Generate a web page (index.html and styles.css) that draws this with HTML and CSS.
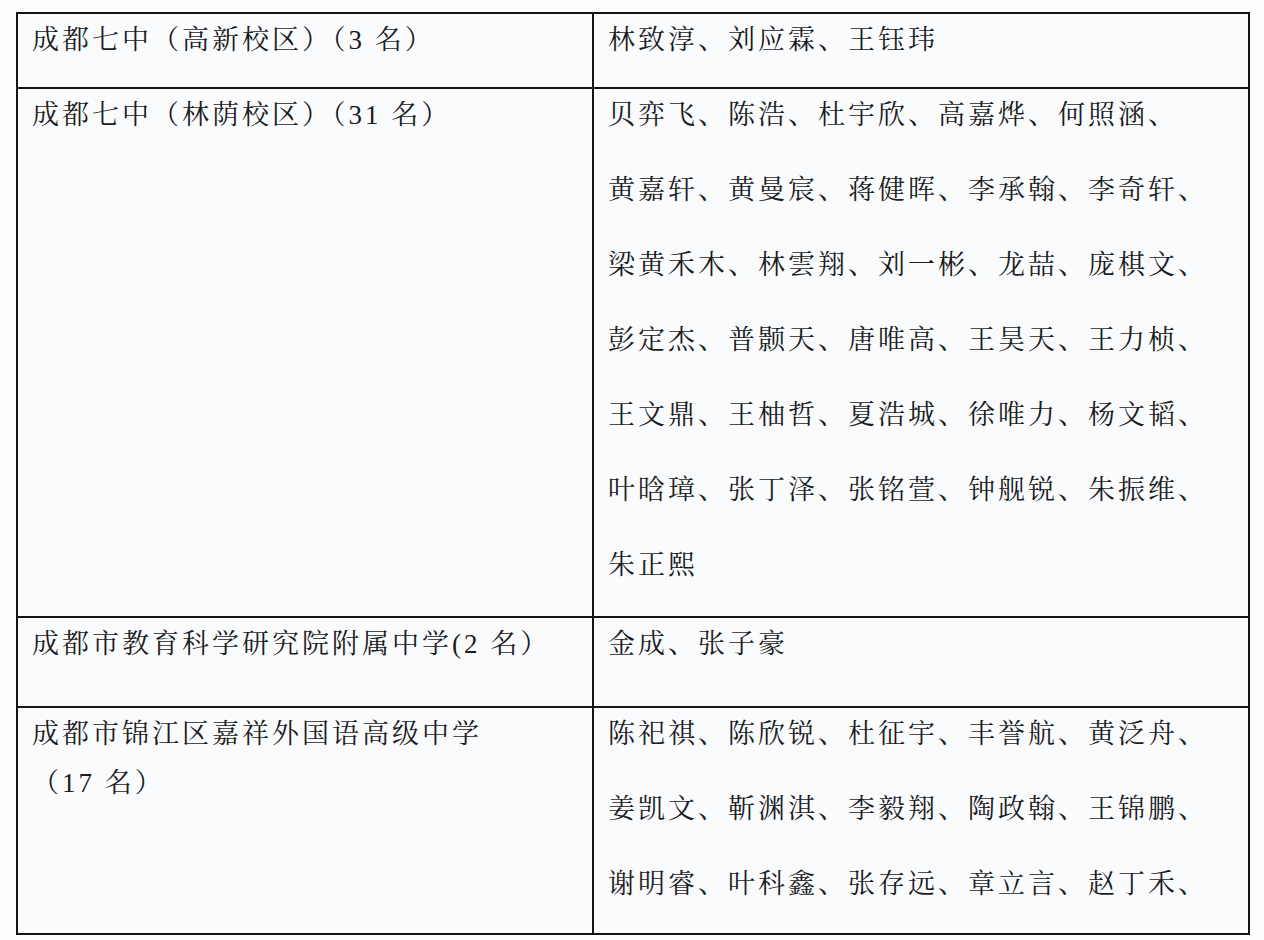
FILE: index.html
```html
<!DOCTYPE html>
<html lang="zh-CN">
<head>
<meta charset="utf-8">
<title>名单</title>
<link rel="stylesheet" href="styles.css">
</head>
<body>
<div class="sheet">
  <div class="cell school r1"><p class="school-text">成都七中（高新校区）（3 名）</p></div>
  <div class="cell names r1"><p class="names-text"><span class="n">林致淳、</span><span class="n">刘应霖、</span><span class="n">王钰玮</span></p></div>

  <div class="cell school r2"><p class="school-text">成都七中（林荫校区）（31 名）</p></div>
  <div class="cell names r2"><p class="names-text"><span class="n">贝弈飞、</span><span class="n">陈浩、</span><span class="n">杜宇欣、</span><span class="n">高嘉烨、</span><span class="n">何照涵、</span><span class="n">黄嘉轩、</span><span class="n">黄曼宸、</span><span class="n">蒋健晖、</span><span class="n">李承翰、</span><span class="n">李奇轩、</span><span class="n">梁黄禾木、</span><span class="n">林雲翔、</span><span class="n">刘一彬、</span><span class="n">龙喆、</span><span class="n">庞棋文、</span><span class="n">彭定杰、</span><span class="n">普颢天、</span><span class="n">唐唯高、</span><span class="n">王昊天、</span><span class="n">王力桢、</span><span class="n">王文鼎、</span><span class="n">王柚哲、</span><span class="n">夏浩城、</span><span class="n">徐唯力、</span><span class="n">杨文韬、</span><span class="n">叶晗璋、</span><span class="n">张丁泽、</span><span class="n">张铭萱、</span><span class="n">钟舰锐、</span><span class="n">朱振维、</span><span class="n">朱正熙</span></p></div>

  <div class="cell school r3"><p class="school-text">成都市教育科学研究院附属中学(2 名）</p></div>
  <div class="cell names r3"><p class="names-text"><span class="n">金成、</span><span class="n">张子豪</span></p></div>

  <div class="cell school r4"><p class="school-text">成都市锦江区嘉祥外国语高级中学<span class="n">（17 名）</span></p></div>
  <div class="cell names r4"><p class="names-text"><span class="n">陈祀祺、</span><span class="n">陈欣锐、</span><span class="n">杜征宇、</span><span class="n">丰誉航、</span><span class="n">黄泛舟、</span><span class="n">姜凯文、</span><span class="n">靳渊淇、</span><span class="n">李毅翔、</span><span class="n">陶政翰、</span><span class="n">王锦鹏、</span><span class="n">谢明睿、</span><span class="n">叶科鑫、</span><span class="n">张存远、</span><span class="n">章立言、</span><span class="n">赵丁禾、</span></p></div>
</div>
</body>
</html>
```
FILE: styles.css
```css
* { box-sizing: border-box; }

html, body {
  margin: 0;
  padding: 0;
  background: #fcfdfe;
}

body {
  padding: 12px 0 0 16px;
  font-family: "Liberation Serif", "Noto Serif CJK SC", "Noto Sans CJK SC", serif;
  font-size: 27px;
  letter-spacing: 3px;
  color: #1c1c1e;
}

.sheet {
  display: grid;
  grid-template-columns: 576px 656px;
  grid-template-rows: 75px 529px 90px 227px;
  width: 1234px;
  border-top: 2px solid #141414;
  border-left: 2px solid #141414;
  background: #f9fbfd;
}

.cell {
  border-right: 2px solid #141414;
  border-bottom: 2px solid #141414;
  overflow: hidden;
}

.school {
  padding: 2px 4px 0 14px;
}

.names {
  padding: 0 8px 0 14px;
}

.school-text {
  margin: 0;
  line-height: 49px;
}

.names-text {
  margin: -11px 0 0 0;
  line-height: 75px;
}

.n {
  display: inline-block;
  white-space: nowrap;
}
```
